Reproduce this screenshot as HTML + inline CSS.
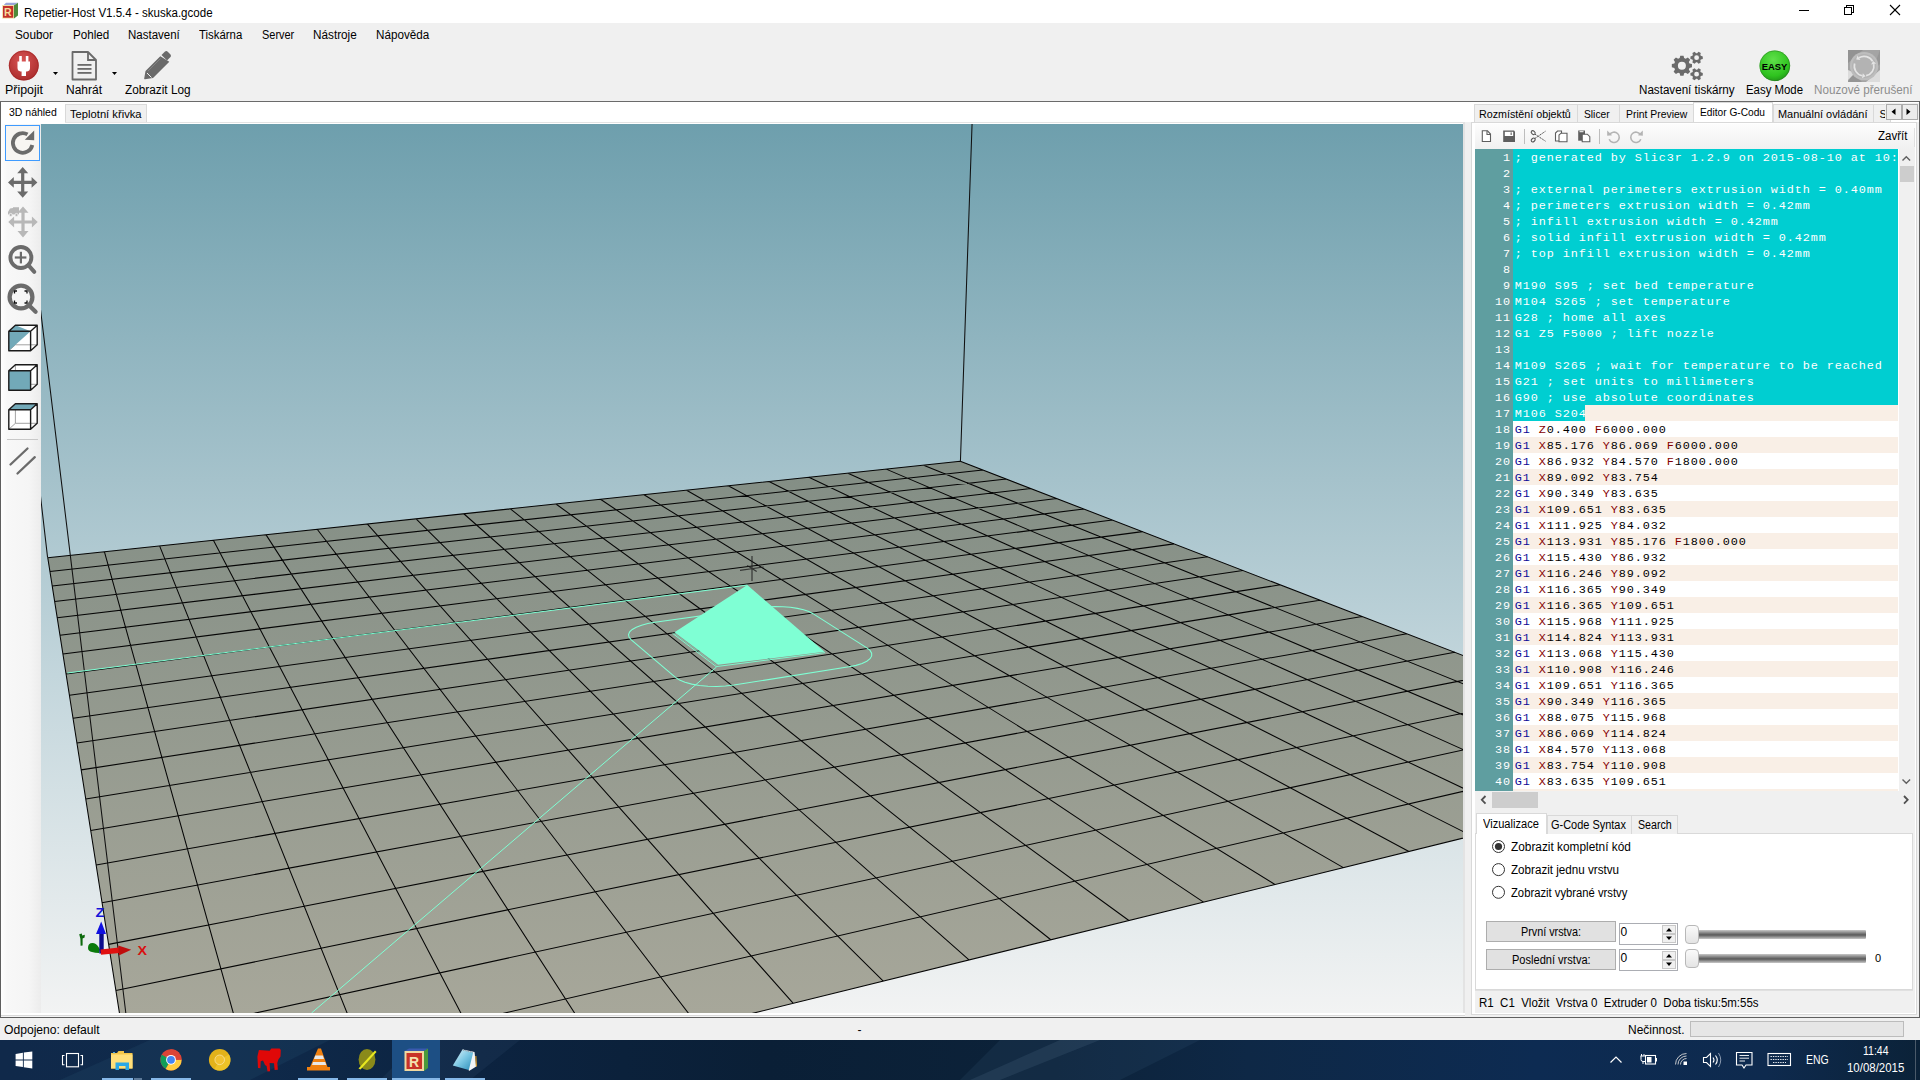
<!DOCTYPE html><html><head><meta charset="utf-8"><style>
html,body{margin:0;padding:0;}
body{width:1920px;height:1080px;overflow:hidden;position:relative;background:#f0f0f0;font-family:"Liberation Sans",sans-serif;}
.t{position:absolute;white-space:pre;line-height:1;transform-origin:0 0;}
.r{position:absolute;box-sizing:border-box;}
svg{position:absolute;overflow:visible;}
</style></head><body>
<div class="r" style="left:0px;top:0px;width:1920px;height:23px;background:#ffffff;"></div>
<svg style="left:0;top:0" width="24" height="23" viewBox="0 0 24 23">
<polygon points="3.5,5.2 6,2.8 18,2.8 14,5.2" fill="#9aa6d8"/>
<polygon points="14,5.2 18,2.8 18,15.5 14,18.5" fill="#4f8a3a"/>
<rect x="2.2" y="5.1" width="11.8" height="13.4" fill="#f2dca0"/>
<rect x="3" y="6" width="10.2" height="11.7" fill="#c3302a"/>
<text x="3.9" y="16.2" font-family="Liberation Sans" font-weight="bold" font-size="11.5" fill="#f6dc9c" textLength="7.6" lengthAdjust="spacingAndGlyphs">R</text>
</svg>
<div class="t " style="left:23.50px;top:6.64px;font-size:12px;color:#000;font-family:'Liberation Sans', sans-serif;font-weight:normal;transform:scaleX(0.9615);">Repetier-Host V1.5.4 - skuska.gcode</div>
<svg style="left:1780px;top:0" width="140" height="23" viewBox="1780 0 140 23">
<line x1="1799" y1="10.5" x2="1809" y2="10.5" stroke="#000" stroke-width="1"/>
<rect x="1846.5" y="5.5" width="7" height="7" fill="none" stroke="#000" stroke-width="1"/>
<rect x="1844.5" y="7.5" width="7" height="7" fill="#fff" stroke="#000" stroke-width="1"/>
<line x1="1890" y1="5" x2="1900" y2="15" stroke="#000" stroke-width="1.1"/>
<line x1="1900" y1="5" x2="1890" y2="15" stroke="#000" stroke-width="1.1"/>
</svg>
<div class="t " style="left:15.00px;top:29.34px;font-size:12px;color:#000;font-family:'Liberation Sans', sans-serif;font-weight:normal;transform:scaleX(0.9822);">Soubor</div>
<div class="t " style="left:72.50px;top:29.34px;font-size:12px;color:#000;font-family:'Liberation Sans', sans-serif;font-weight:normal;transform:scaleX(0.9703);">Pohled</div>
<div class="t " style="left:128.25px;top:29.34px;font-size:12px;color:#000;font-family:'Liberation Sans', sans-serif;font-weight:normal;transform:scaleX(0.9581);">Nastavení</div>
<div class="t " style="left:199.25px;top:29.34px;font-size:12px;color:#000;font-family:'Liberation Sans', sans-serif;font-weight:normal;transform:scaleX(0.9489);">Tiskárna</div>
<div class="t " style="left:262.00px;top:29.34px;font-size:12px;color:#000;font-family:'Liberation Sans', sans-serif;font-weight:normal;transform:scaleX(0.9125);">Server</div>
<div class="t " style="left:313.25px;top:29.34px;font-size:12px;color:#000;font-family:'Liberation Sans', sans-serif;font-weight:normal;transform:scaleX(0.9790);">Nástroje</div>
<div class="t " style="left:376.25px;top:29.34px;font-size:12px;color:#000;font-family:'Liberation Sans', sans-serif;font-weight:normal;transform:scaleX(0.9734);">Nápověda</div>
<svg style="left:0;top:44px" width="200" height="40" viewBox="0 44 200 40">
<defs><radialGradient id="rg1" cx="0.45" cy="0.35" r="0.7"><stop offset="0" stop-color="#d95555"/><stop offset="1" stop-color="#a82a2a"/></radialGradient></defs>
<circle cx="23.8" cy="65.6" r="15" fill="url(#rg1)"/>
<circle cx="23.8" cy="65.6" r="14.5" fill="none" stroke="#9a2020" stroke-width="0.8" opacity="0.6"/>
<rect x="19.2" y="56" width="2.6" height="6" fill="#fff"/>
<rect x="25.8" y="56" width="2.6" height="6" fill="#fff"/>
<path d="M17.5,61.5 H30 V68 Q30,71 27,71.5 H26 V76 H21.6 V71.5 H20.6 Q17.5,71 17.5,68 Z" fill="#fff"/>
<path d="M53,72 L58,72 L55.5,75 Z" fill="#000"/>
<path d="M112,72 L117,72 L114.5,75 Z" fill="#000"/>
<path d="M72.5,52 H88 L96,60 V79.5 H72.5 Z" fill="none" stroke="#6a6a6a" stroke-width="1.8" stroke-linejoin="round"/>
<path d="M88,52 V60 H96" fill="none" stroke="#6a6a6a" stroke-width="1.8"/>
<rect x="77.5" y="64" width="14" height="1.8" fill="#6a6a6a"/>
<rect x="77.5" y="68" width="14" height="1.8" fill="#6a6a6a"/>
<rect x="77.5" y="72" width="14" height="1.8" fill="#6a6a6a"/>
<path d="M161.5,55 L165,51.5 Q166.5,50.5 168,52 L170.5,54.5 Q171.5,56 170.5,57 L167,60.5 Z" fill="#6a6a6a"/>
<path d="M160.3,56.2 L169.3,61.7 L153,78 L145,79.3 Q144,79.5 144.2,78.5 L145.5,71 Z" fill="#6a6a6a"/>
<path d="M147,73 L151.5,77.5" stroke="#f0f0f0" stroke-width="1"/>
<path d="M148,71 L160.5,58.5" stroke="#8a8a8a" stroke-width="0.8"/>
</svg>
<div class="t " style="left:5.00px;top:83.84px;font-size:12px;color:#000;font-family:'Liberation Sans', sans-serif;font-weight:normal;transform:scaleX(1.0358);">Připojit</div>
<div class="t " style="left:66.00px;top:83.84px;font-size:12px;color:#000;font-family:'Liberation Sans', sans-serif;font-weight:normal;transform:scaleX(0.9996);">Nahrát</div>
<div class="t " style="left:125.00px;top:83.84px;font-size:12px;color:#000;font-family:'Liberation Sans', sans-serif;font-weight:normal;transform:scaleX(0.9837);">Zobrazit Log</div>
<svg style="left:1600px;top:44px" width="320" height="42" viewBox="1600 44 320 42">
<path d="M1679.68,58.12 L1680.26,55.63 L1683.54,55.63 L1684.12,58.12 L1685.69,58.77 L1687.86,57.42 L1690.18,59.74 L1688.83,61.91 L1689.48,63.48 L1691.97,64.06 L1691.97,67.34 L1689.48,67.92 L1688.83,69.49 L1690.18,71.66 L1687.86,73.98 L1685.69,72.63 L1684.12,73.28 L1683.54,75.77 L1680.26,75.77 L1679.68,73.28 L1678.11,72.63 L1675.94,73.98 L1673.62,71.66 L1674.97,69.49 L1674.32,67.92 L1671.83,67.34 L1671.83,64.06 L1674.32,63.48 L1674.97,61.91 L1673.62,59.74 L1675.94,57.42 L1678.11,58.77 Z M1685.90,65.70 A4.0,4.0 0 1 0 1677.90,65.70 A4.0,4.0 0 1 0 1685.90,65.70 Z" fill="#6a6a6a" fill-rule="evenodd"/>
<path d="M1700.81,55.85 L1702.77,56.41 L1702.77,58.99 L1700.81,59.55 L1700.31,60.43 L1700.80,62.39 L1698.57,63.69 L1697.11,62.27 L1696.09,62.27 L1694.63,63.69 L1692.40,62.39 L1692.89,60.43 L1692.39,59.55 L1690.43,58.99 L1690.43,56.41 L1692.39,55.85 L1692.89,54.97 L1692.40,53.01 L1694.63,51.71 L1696.09,53.13 L1697.11,53.13 L1698.57,51.71 L1700.80,53.01 L1700.31,54.97 Z M1699.00,57.70 A2.4,2.4 0 1 0 1694.20,57.70 A2.4,2.4 0 1 0 1699.00,57.70 Z" fill="#6a6a6a" fill-rule="evenodd"/>
<path d="M1700.81,72.35 L1702.77,72.91 L1702.77,75.49 L1700.81,76.05 L1700.31,76.93 L1700.80,78.89 L1698.57,80.19 L1697.11,78.77 L1696.09,78.77 L1694.63,80.19 L1692.40,78.89 L1692.89,76.93 L1692.39,76.05 L1690.43,75.49 L1690.43,72.91 L1692.39,72.35 L1692.89,71.47 L1692.40,69.51 L1694.63,68.21 L1696.09,69.63 L1697.11,69.63 L1698.57,68.21 L1700.80,69.51 L1700.31,71.47 Z M1699.00,74.20 A2.4,2.4 0 1 0 1694.20,74.20 A2.4,2.4 0 1 0 1699.00,74.20 Z" fill="#6a6a6a" fill-rule="evenodd"/>
<defs><radialGradient id="rg2" cx="0.45" cy="0.3" r="0.75"><stop offset="0" stop-color="#5fe04a"/><stop offset="0.7" stop-color="#2fc31f"/><stop offset="1" stop-color="#1f8f18"/></radialGradient>
<radialGradient id="rg3" cx="0.5" cy="0.5" r="0.6"><stop offset="0" stop-color="#bdbdbd"/><stop offset="1" stop-color="#a8a8a8"/></radialGradient></defs>
<circle cx="1774.8" cy="65.8" r="15.3" fill="url(#rg2)"/>
<circle cx="1774.8" cy="65.8" r="15" fill="none" stroke="#2a6a22" stroke-width="0.6" opacity="0.7"/>
<text x="1774.5" y="69.7" text-anchor="middle" font-family="Liberation Sans" font-weight="bold" font-size="9" fill="#000" textLength="25.6" lengthAdjust="spacingAndGlyphs">EASY</text>
<rect x="1848" y="50" width="32" height="32" fill="#a4a4a4"/>
<polygon points="1848,50 1863,50 1848,63" fill="#939393"/>
<polygon points="1880,50 1880,64 1872,72" fill="#939393" opacity="0.8"/>
<polygon points="1848,82 1862,82 1853,73" fill="#959595"/>
<polygon points="1880,82 1866,82 1880,70" fill="#dcdcdc"/>
<polygon points="1848,70 1848,80 1855,73" fill="#dcdcdc"/>
<circle cx="1864.1" cy="66.1" r="14.2" fill="#bdbdbd"/>
<circle cx="1864.1" cy="66.1" r="12" fill="#b3b3b3"/>
<path d="M1858.91,57.79 A9.8,9.8 0 0 1 1872.59,61.20 M1873.69,64.06 A9.8,9.8 0 0 1 1866.14,75.69 M1862.40,75.75 A9.8,9.8 0 0 1 1854.63,63.56" fill="none" stroke="#e4e4e4" stroke-width="1.7"/>
<path d="M1856.19,59.48 L1857.53,55.58 L1860.28,59.99 Z" fill="#e4e4e4"/><path d="M1873.02,60.93 L1876.23,63.52 L1871.14,64.60 Z" fill="#e4e4e4"/><path d="M1865.55,76.31 L1861.95,78.31 L1862.85,73.19 Z" fill="#e4e4e4"/>
</svg>
<div class="t " style="left:1639.40px;top:83.94px;font-size:12px;color:#000;font-family:'Liberation Sans', sans-serif;font-weight:normal;transform:scaleX(0.9687);">Nastavení tiskárny</div>
<div class="t " style="left:1746.00px;top:83.94px;font-size:12px;color:#000;font-family:'Liberation Sans', sans-serif;font-weight:normal;transform:scaleX(0.9498);">Easy Mode</div>
<div class="t " style="left:1814.00px;top:83.94px;font-size:12px;color:#8d8d8d;font-family:'Liberation Sans', sans-serif;font-weight:normal;transform:scaleX(0.9716);">Nouzové přerušení</div>
<div class="r" style="left:0px;top:101px;width:1920px;height:1px;background:#6a6a6a;"></div>
<div class="r" style="left:0px;top:102px;width:1px;height:916px;background:#5f5f5f;"></div>
<div class="r" style="left:1px;top:102px;width:1462px;height:22px;background:#ffffff;"></div>
<div class="r" style="left:65px;top:104px;width:82px;height:19px;background:#f0f0f0;border:1px solid #d9d9d9;border-bottom:none;"></div>
<div class="t " style="left:9.20px;top:106.59px;font-size:11px;color:#000;font-family:'Liberation Sans', sans-serif;font-weight:normal;transform:scaleX(0.9524);">3D náhled</div>
<div class="t " style="left:70.40px;top:108.69px;font-size:11px;color:#000;font-family:'Liberation Sans', sans-serif;font-weight:normal;transform:scaleX(1.0179);">Teplotní křivka</div>
<div class="r" style="left:65px;top:122px;width:1400px;height:1px;background:#e3e3e3;"></div>
<div class="r" style="left:1463px;top:122px;width:2px;height:892px;background:#e3e3e3;"></div>
<div class="r" style="left:1px;top:1013px;width:1464px;height:2px;background:#ffffff;"></div>
<div class="r" style="left:1px;top:1015px;width:1464px;height:1px;background:#d9d9d9;"></div>
<div class="r" style="left:1px;top:1016px;width:1464px;height:1px;background:#f4f4f4;"></div>
<div class="r" style="left:0px;top:1017px;width:1920px;height:1px;background:#5f5f5f;"></div>
<div class="r" style="left:1px;top:124px;width:40px;height:889px;background:linear-gradient(to right,#ffffff 0%,#f8f8f8 15%,#f5f5f5 70%,#ececec 100%);"></div>
<svg style="left:0;top:120px" width="42" height="370" viewBox="0 120 42 370">
<rect x="5.5" y="125.5" width="34" height="35" fill="#f7f5f2" stroke="#3f9bff" stroke-width="1"/>
<path d="M32.3,145 A9.8,9.8 0 1 1 27.5,134.4" fill="none" stroke="#6b6b6b" stroke-width="3.8"/>
<path d="M34.2,130.6 L34.2,140.2 L24.8,139.8 Z" fill="#6b6b6b"/>
<path d="M22.7,167 L28.2,173.2 L24.3,173.2 L24.3,180.8 L31.6,180.8 L31.6,177 L37.4,182.4 L31.6,187.8 L31.6,184 L24.3,184 L24.3,191.5 L28.2,191.5 L22.7,197.8 L17.2,191.5 L21.1,191.5 L21.1,184 L13.8,184 L13.8,187.8 L8,182.4 L13.8,177 L13.8,180.8 L21.1,180.8 L21.1,173.2 L17.2,173.2 Z" fill="#6b6b6b"/>
<g transform="translate(0.3,39.6)" fill="#b8b8b8">
<path d="M22.7,167 L28.2,173.2 L24.3,173.2 L24.3,180.8 L31.6,180.8 L31.6,177 L37.4,182.4 L31.6,187.8 L31.6,184 L24.3,184 L24.3,191.5 L28.2,191.5 L22.7,197.8 L17.2,191.5 L21.1,191.5 L21.1,184 L13.8,184 L13.8,187.8 L8,182.4 L13.8,177 L13.8,180.8 L21.1,180.8 L21.1,173.2 L17.2,173.2 Z"/>
</g>
<path d="M8,212 L10,208.5 L13,208 L13,207.2 L19,207.2 L19,214.5 L8,214.5 Z" fill="#b8b8b8"/>
<circle cx="10.7" cy="215" r="1.6" fill="#b8b8b8" stroke="#f5f5f5" stroke-width="0.8"/>
<circle cx="16.5" cy="215" r="1.6" fill="#b8b8b8" stroke="#f5f5f5" stroke-width="0.8"/>
<circle cx="20.9" cy="257.5" r="10.5" fill="none" stroke="#6b6b6b" stroke-width="3.9"/>
<line x1="28.3" y1="265.2" x2="34.3" y2="271.8" stroke="#6b6b6b" stroke-width="4" stroke-linecap="round"/>
<rect x="14.8" y="256.4" width="11.6" height="2.2" fill="#6b6b6b"/>
<rect x="19.8" y="251.8" width="2.2" height="11.6" fill="#6b6b6b"/>
<circle cx="21" cy="297" r="11.4" fill="none" stroke="#6b6b6b" stroke-width="4.3"/>
<line x1="29.2" y1="305.6" x2="35.6" y2="311.8" stroke="#6b6b6b" stroke-width="4.2" stroke-linecap="round"/>
<path d="M14.5,293.5 V291 H17 M24.5,291 H27 V293.5 M27,300.5 V303 H24.5 M17,303 H14.5 V300.5" fill="none" stroke="#111" stroke-width="1.3"/>

<polygon points="8.8,350.8 8.8,331.3 15.4,325.3 37.2,325.3 37.2,344.8 30.6,350.8" fill="#fff"/><path d="M15.4,325.3 V344.8 H37.2 M15.4,344.8 L8.8,350.8" fill="none" stroke="#8a8a8a" stroke-width="0.8"/><polygon points="8.8,350.8 8.8,331.3 15.4,325.3 30.6,331.3" fill="#72a9b8"/><path d="M8.8,331.3 H30.6 V350.8 H8.8 Z M8.8,331.3 L15.4,325.3 H37.2 L30.6,331.3 M37.2,325.3 V344.8 L30.6,350.8" fill="none" stroke="#1a1a1a" stroke-width="1.4" stroke-linejoin="round"/><polygon points="8.8,390.3 8.8,370.8 15.4,364.8 37.2,364.8 37.2,384.3 30.6,390.3" fill="#fff"/><path d="M15.4,364.8 V384.3 H37.2 M15.4,384.3 L8.8,390.3" fill="none" stroke="#8a8a8a" stroke-width="0.8"/><rect x="8.8" y="370.8" width="21.8" height="19.5" fill="#72a9b8"/><path d="M8.8,370.8 H30.6 V390.3 H8.8 Z M8.8,370.8 L15.4,364.8 H37.2 L30.6,370.8 M37.2,364.8 V384.3 L30.6,390.3" fill="none" stroke="#1a1a1a" stroke-width="1.4" stroke-linejoin="round"/><polygon points="8.8,429.3 8.8,409.8 15.4,403.8 37.2,403.8 37.2,423.3 30.6,429.3" fill="#fff"/><path d="M15.4,403.8 V423.3 H37.2 M15.4,423.3 L8.8,429.3" fill="none" stroke="#8a8a8a" stroke-width="0.8"/><polygon points="8.8,409.8 15.4,403.8 37.2,403.8 30.6,409.8" fill="#72a9b8"/><path d="M8.8,409.8 H30.6 V429.3 H8.8 Z M8.8,409.8 L15.4,403.8 H37.2 L30.6,409.8 M37.2,403.8 V423.3 L30.6,429.3" fill="none" stroke="#1a1a1a" stroke-width="1.4" stroke-linejoin="round"/>
<line x1="7" y1="439.5" x2="38" y2="439.5" stroke="#c8c8c8" stroke-width="1"/>
<line x1="10.5" y1="464.5" x2="27.5" y2="448.5" stroke="#6b6b6b" stroke-width="2.3" stroke-linecap="round"/>
<line x1="17.5" y1="473.5" x2="34.8" y2="457.2" stroke="#6b6b6b" stroke-width="2.3" stroke-linecap="round"/>
</svg>
<svg style="left:41px;top:124px" width="1422" height="889" viewBox="41 124 1422 889">
<defs>
<linearGradient id="bg3d" x1="0" y1="124" x2="0" y2="1013" gradientUnits="userSpaceOnUse"><stop offset="0" stop-color="#6e9fad"/><stop offset="0.4" stop-color="#a5c2cb"/><stop offset="0.62" stop-color="#c3d6dc"/><stop offset="1" stop-color="#f2f3f3"/></linearGradient>
<linearGradient id="bed" x1="0" y1="462" x2="0" y2="1013" gradientUnits="userSpaceOnUse"><stop offset="0" stop-color="#838e85"/><stop offset="1" stop-color="#a7a79a"/></linearGradient>
<clipPath id="vclip"><rect x="41" y="124" width="1422" height="889"/></clipPath>
</defs>
<g clip-path="url(#vclip)">
<rect x="41" y="124" width="1422" height="889" fill="url(#bg3d)"/>
<polygon points="47.75,557.69 960.28,461.31 1751.61,766.92 143.16,1163.66" fill="url(#bed)"/>
<path d="M47.75,557.69L143.16,1163.66M47.75,557.69L960.28,461.31M104.38,551.70L266.85,1133.15M49.91,571.43L982.75,469.99M159.58,545.87L383.74,1104.32M52.21,585.98L1006.26,479.07M213.42,540.19L494.36,1077.03M54.64,601.43L1030.89,488.58M265.94,534.64L599.20,1051.17M57.22,617.85L1056.73,498.56M317.20,529.23L698.71,1026.63M59.98,635.33L1083.86,509.03M367.23,523.94L793.28,1003.30M62.91,653.99L1112.38,520.05M416.09,518.78L883.27,981.10M66.05,673.94L1142.40,531.64M463.80,513.74L969.01,959.95M69.42,695.34L1174.05,543.87M510.41,508.82L1050.79,939.78M73.04,718.33L1207.46,556.77M555.97,504.01L1128.88,920.52M76.94,743.10L1242.78,570.41M600.50,499.31L1203.53,902.11M81.16,769.88L1280.18,584.85M644.03,494.71L1274.94,884.49M85.73,798.91L1319.85,600.17M686.61,490.21L1343.34,867.62M90.70,830.49L1362.00,616.45M728.26,485.81L1408.91,851.45M96.13,864.96L1406.88,633.78M769.01,481.51L1471.82,835.93M102.08,902.76L1454.75,652.27M808.90,477.30L1532.23,821.03M108.63,944.39L1505.92,672.03M847.94,473.17L1590.28,806.71M115.88,990.44L1560.75,693.21M886.17,469.14L1646.12,792.94M123.95,1041.68L1619.66,715.96M923.61,465.18L1699.85,779.69M132.98,1099.03L1683.09,740.46M960.28,461.31L1751.61,766.92M143.16,1163.66L1751.61,766.92" stroke="#050505" stroke-width="1.05" fill="none"/>
<path d="M47.6,557.6 L41.4,504 L38,475 M960.4,462.1 L972.2,120 M137.9,1112.7 L40.2,307 L35,264" stroke="#101010" stroke-width="1.05" fill="none"/>
<polygon points="760.50,607.62 767.75,606.86 775.33,606.56 782.98,606.71 790.42,607.31 797.37,608.35 803.60,609.78 808.86,611.57 812.95,613.64 866.83,647.86 870.00,650.44 871.64,653.17 871.66,655.95 870.04,658.66 866.81,661.21 862.08,663.48 856.03,665.38 848.90,666.83 733.87,685.06 725.49,686.06 716.72,686.47 707.93,686.27 699.48,685.47 691.72,684.11 684.97,682.25 679.48,679.96 675.46,677.34 631.03,639.58 628.97,637.09 628.51,634.51 629.62,631.93 632.25,629.46 636.28,627.19 641.54,625.19 647.83,623.54 654.91,622.30" fill="none" stroke="#7fffd4" stroke-width="1.1"/>
<path d="M67.4,673 L747.3,585.1 M311.5,1013 L716.5,667" stroke="#7fffd4" stroke-width="1" fill="none"/>
<polygon points="747.3,585.1 674.5,632.2 718,664.8 824.5,651.8" fill="#7fffd4"/>
<path d="M672.6,633.4 L716.2,666.6 L825,652.6" stroke="#7fffd4" stroke-width="0.9" fill="none"/>
<path d="M674.2,633.2 L717.4,665.8" stroke="#7fffd4" stroke-width="0.6" fill="none" opacity="0.6"/>
<path d="M752,556 V581 M747.2,565.5 L756.7,571.6 M740,570.3 L763.7,567" stroke="#1e1e1e" stroke-width="1.2" fill="none" opacity="0.8"/>
</g>
<g>
<path d="M88,948 Q88,943 92.5,943 Q96,943 98.5,947 L100,949.5 L99,953 Q95,953 92,952 Q88,951 88,948 Z" fill="#0b7a0b"/>
<path d="M79.2,934.2 L81.8,933.5 L82.2,935.5 L84.8,934.8 L84.6,937.5 L82.6,938.5 L82.6,945.5 L80.6,945.8 L80.4,938.8 Z" fill="#0c6a0c"/>
<rect x="99.3" y="933" width="4.4" height="20.5" fill="#0a0a8c"/>
<path d="M96,934 L101.2,921.5 L106,934 Z" fill="#1010e0"/>
<text x="95.5" y="916.5" font-family="Liberation Sans" font-weight="bold" font-size="12.5" fill="#1414d8" textLength="9" lengthAdjust="spacingAndGlyphs">Z</text>
<path d="M100.5,949.5 L119,947.6 L119.5,953 L101,954.8 Z" fill="#e01010"/>
<path d="M118.3,945.4 L131.2,949.8 L118.8,955.6 Z" fill="#c00c0c"/>
<text x="137.5" y="955" font-family="Liberation Sans" font-weight="bold" font-size="13" fill="#d81010" textLength="9.5" lengthAdjust="spacingAndGlyphs">X</text>
</g>
</svg>
<div class="r" style="left:1462px;top:102px;width:457px;height:20px;background:#ffffff;"></div>
<div class="r" style="left:1919px;top:101px;width:1px;height:917px;background:#5f5f5f;"></div>
<div class="r" style="left:1473.5px;top:104px;width:104.5px;height:19px;background:#f0f0f0;border:1px solid #d9d9d9;border-bottom:none;"></div>
<div class="t " style="left:1479.40px;top:108.79px;font-size:11px;color:#000;font-family:'Liberation Sans', sans-serif;font-weight:normal;transform:scaleX(0.9754);">Rozmístění objektů</div>
<div class="r" style="left:1577px;top:104px;width:43px;height:19px;background:#f0f0f0;border:1px solid #d9d9d9;border-bottom:none;"></div>
<div class="t " style="left:1584.40px;top:108.79px;font-size:11px;color:#000;font-family:'Liberation Sans', sans-serif;font-weight:normal;transform:scaleX(0.9309);">Slicer</div>
<div class="r" style="left:1619px;top:104px;width:74.5px;height:19px;background:#f0f0f0;border:1px solid #d9d9d9;border-bottom:none;"></div>
<div class="t " style="left:1626.25px;top:108.79px;font-size:11px;color:#000;font-family:'Liberation Sans', sans-serif;font-weight:normal;transform:scaleX(0.9450);">Print Preview</div>
<div class="r" style="left:1773px;top:104px;width:101px;height:19px;background:#f0f0f0;border:1px solid #d9d9d9;border-bottom:none;"></div>
<div class="t " style="left:1778.00px;top:108.79px;font-size:11px;color:#000;font-family:'Liberation Sans', sans-serif;font-weight:normal;transform:scaleX(0.9948);">Manuální ovládání</div>
<div class="r" style="left:1873px;top:104px;width:18px;height:19px;background:#f0f0f0;border:1px solid #d9d9d9;border-bottom:none;"></div>
<div class="t " style="left:1879.50px;top:108.79px;font-size:11px;color:#000;font-family:'Liberation Sans', sans-serif;font-weight:normal;">S</div>
<div class="r" style="left:1692.5px;top:102px;width:80.5px;height:21px;background:#ffffff;border:1px solid #d9d9d9;border-bottom:none;"></div>
<div class="t " style="left:1700.00px;top:106.79px;font-size:11px;color:#000;font-family:'Liberation Sans', sans-serif;font-weight:normal;transform:scaleX(0.9240);">Editor G-Codu</div>
<div class="r" style="left:1885px;top:103px;width:34px;height:17px;background:#f0f0f0;"></div>
<div class="r" style="left:1886px;top:104px;width:16px;height:16px;background:#ececec;border:1px solid #acacac;"></div>
<div class="r" style="left:1902px;top:104px;width:16px;height:16px;background:#ececec;border:1px solid #acacac;"></div>
<svg style="left:1880px;top:100px" width="40" height="24" viewBox="1880 100 40 24"><path d="M1895.5,108.5 L1891.5,111.8 L1895.5,115 Z M1906.5,108.5 L1910.5,111.8 L1906.5,115 Z" fill="#000"/></svg>
<div class="r" style="left:1471px;top:122px;width:446px;height:893px;background:#ffffff;border:1px solid #d9d9d9;"></div>
<div class="r" style="left:1475px;top:124px;width:440px;height:25px;background:linear-gradient(#fdfdfd,#f0f0f0);"></div>
<div class="r" style="left:1914px;top:128px;width:1px;height:19px;background:#e0e0e0;"></div>
<svg style="left:1475px;top:124px" width="180" height="25" viewBox="1475 124 180 25">
<path d="M1482.3,130.8 H1487.5 L1490.5,134 V141.5 H1482.3 Z" fill="#fff" stroke="#5e5e5e" stroke-width="1.1"/>
<path d="M1487,130.8 V134.5 H1490.5" fill="none" stroke="#5e5e5e" stroke-width="1.1"/>
<path d="M1503.2,130.6 H1514 L1515,131.6 V142 H1503.2 Z" fill="#5e5e5e"/>
<rect x="1504.8" y="131.8" width="8.4" height="4.2" fill="#fff"/>
<rect x="1510.6" y="132.4" width="1.1" height="2.6" fill="#5e5e5e"/>
<line x1="1524.5" y1="129" x2="1524.5" y2="144" stroke="#bdbdbd" stroke-width="1"/>
<ellipse cx="1533.2" cy="132.6" rx="2.2" ry="1.6" transform="rotate(40 1533.2 132.6)" fill="none" stroke="#555" stroke-width="1.1"/>
<ellipse cx="1533.2" cy="140" rx="2.2" ry="1.6" transform="rotate(-40 1533.2 140)" fill="none" stroke="#555" stroke-width="1.1"/>
<path d="M1535,134.2 L1545.5,141.2 M1535,138.4 L1545.5,131.2" stroke="#555" stroke-width="1" stroke-dasharray="1.4 0.6"/>
<path d="M1555.5,141 V133 L1557.5,131 H1561.5 V141 Z" fill="#fff" stroke="#5e5e5e" stroke-width="1.1"/>
<path d="M1559,141.8 V135 L1561,133.2 H1567 V141.8 Z" fill="#fff" stroke="#5e5e5e" stroke-width="1.1"/>
<rect x="1578.2" y="130.5" width="6.8" height="10.2" fill="#5e5e5e"/>
<rect x="1579.5" y="131.2" width="4" height="1" fill="#fff"/>
<path d="M1582.2,141.8 V134.2 H1587.3 L1589.8,136.7 V141.8 Z" fill="#fff" stroke="#5e5e5e" stroke-width="1.1"/>
<line x1="1599.5" y1="129" x2="1599.5" y2="144" stroke="#bdbdbd" stroke-width="1"/>
<path d="M1609.5,134.8 A5.2,5.2 0 1 1 1609.2,139.2" fill="none" stroke="#b4b4b4" stroke-width="1.6"/>
<path d="M1607.2,130.5 L1607.2,135.8 L1612.2,135.2 Z" fill="#b4b4b4"/>
<path d="M1640.5,134.8 A5.2,5.2 0 1 0 1640.8,139.2" fill="none" stroke="#b4b4b4" stroke-width="1.6"/>
<path d="M1642.8,130.5 L1642.8,135.8 L1637.8,135.2 Z" fill="#b4b4b4"/>
</svg>
<div class="t " style="left:1878.00px;top:129.74px;font-size:12px;color:#000;font-family:'Liberation Sans', sans-serif;font-weight:normal;transform:scaleX(0.9623);">Zavřít</div>
<div class="r" style="left:1475px;top:149px;width:423px;height:642px;background:#ffffff;"></div>
<div class="r" style="left:1475px;top:149px;width:38px;height:642px;background:#5f9ea0;"></div>
<div class="r" style="left:1513px;top:149px;width:385px;height:16px;background:#00ced1"></div>
<div class="r" style="left:1513px;top:165px;width:385px;height:16px;background:#00ced1"></div>
<div class="r" style="left:1513px;top:181px;width:385px;height:16px;background:#00ced1"></div>
<div class="r" style="left:1513px;top:197px;width:385px;height:16px;background:#00ced1"></div>
<div class="r" style="left:1513px;top:213px;width:385px;height:16px;background:#00ced1"></div>
<div class="r" style="left:1513px;top:229px;width:385px;height:16px;background:#00ced1"></div>
<div class="r" style="left:1513px;top:245px;width:385px;height:16px;background:#00ced1"></div>
<div class="r" style="left:1513px;top:261px;width:385px;height:16px;background:#00ced1"></div>
<div class="r" style="left:1513px;top:277px;width:385px;height:16px;background:#00ced1"></div>
<div class="r" style="left:1513px;top:293px;width:385px;height:16px;background:#00ced1"></div>
<div class="r" style="left:1513px;top:309px;width:385px;height:16px;background:#00ced1"></div>
<div class="r" style="left:1513px;top:325px;width:385px;height:16px;background:#00ced1"></div>
<div class="r" style="left:1513px;top:341px;width:385px;height:16px;background:#00ced1"></div>
<div class="r" style="left:1513px;top:357px;width:385px;height:16px;background:#00ced1"></div>
<div class="r" style="left:1513px;top:373px;width:385px;height:16px;background:#00ced1"></div>
<div class="r" style="left:1513px;top:389px;width:385px;height:16px;background:#00ced1"></div>
<div class="r" style="left:1513px;top:405px;width:385px;height:16px;background:#f9efe6"></div>
<div class="r" style="left:1513px;top:405px;width:72px;height:16px;background:#00ced1"></div>
<div class="r" style="left:1513px;top:437px;width:385px;height:16px;background:#f9efe6"></div>
<div class="r" style="left:1513px;top:469px;width:385px;height:16px;background:#f9efe6"></div>
<div class="r" style="left:1513px;top:501px;width:385px;height:16px;background:#f9efe6"></div>
<div class="r" style="left:1513px;top:533px;width:385px;height:16px;background:#f9efe6"></div>
<div class="r" style="left:1513px;top:565px;width:385px;height:16px;background:#f9efe6"></div>
<div class="r" style="left:1513px;top:597px;width:385px;height:16px;background:#f9efe6"></div>
<div class="r" style="left:1513px;top:629px;width:385px;height:16px;background:#f9efe6"></div>
<div class="r" style="left:1513px;top:661px;width:385px;height:16px;background:#f9efe6"></div>
<div class="r" style="left:1513px;top:693px;width:385px;height:16px;background:#f9efe6"></div>
<div class="r" style="left:1513px;top:725px;width:385px;height:16px;background:#f9efe6"></div>
<div class="r" style="left:1513px;top:757px;width:385px;height:16px;background:#f9efe6"></div>
<div class="r" style="left:1513px;top:789px;width:385px;height:2px;background:#f9efe6"></div>
<div style="position:absolute;left:1475px;top:150px;width:423px;height:641px;overflow:hidden;font-family:'Liberation Mono', monospace;font-size:11.8px;letter-spacing:0.92px;line-height:16px;white-space:pre;">
<div style="position:absolute;left:0;top:0px;width:36px;text-align:right;color:#fff;">1</div>
<div style="position:absolute;left:39.8px;top:0px;color:#fff;">; generated by Slic3r 1.2.9 on 2015-08-10 at 10:59:24</div>
<div style="position:absolute;left:0;top:16px;width:36px;text-align:right;color:#fff;">2</div>
<div style="position:absolute;left:39.8px;top:16px;color:#fff;"></div>
<div style="position:absolute;left:0;top:32px;width:36px;text-align:right;color:#fff;">3</div>
<div style="position:absolute;left:39.8px;top:32px;color:#fff;">; external perimeters extrusion width = 0.40mm</div>
<div style="position:absolute;left:0;top:48px;width:36px;text-align:right;color:#fff;">4</div>
<div style="position:absolute;left:39.8px;top:48px;color:#fff;">; perimeters extrusion width = 0.42mm</div>
<div style="position:absolute;left:0;top:64px;width:36px;text-align:right;color:#fff;">5</div>
<div style="position:absolute;left:39.8px;top:64px;color:#fff;">; infill extrusion width = 0.42mm</div>
<div style="position:absolute;left:0;top:80px;width:36px;text-align:right;color:#fff;">6</div>
<div style="position:absolute;left:39.8px;top:80px;color:#fff;">; solid infill extrusion width = 0.42mm</div>
<div style="position:absolute;left:0;top:96px;width:36px;text-align:right;color:#fff;">7</div>
<div style="position:absolute;left:39.8px;top:96px;color:#fff;">; top infill extrusion width = 0.42mm</div>
<div style="position:absolute;left:0;top:112px;width:36px;text-align:right;color:#fff;">8</div>
<div style="position:absolute;left:39.8px;top:112px;color:#fff;"></div>
<div style="position:absolute;left:0;top:128px;width:36px;text-align:right;color:#fff;">9</div>
<div style="position:absolute;left:39.8px;top:128px;color:#fff;">M190 S95 ; set bed temperature</div>
<div style="position:absolute;left:0;top:144px;width:36px;text-align:right;color:#fff;">10</div>
<div style="position:absolute;left:39.8px;top:144px;color:#fff;">M104 S265 ; set temperature</div>
<div style="position:absolute;left:0;top:160px;width:36px;text-align:right;color:#fff;">11</div>
<div style="position:absolute;left:39.8px;top:160px;color:#fff;">G28 ; home all axes</div>
<div style="position:absolute;left:0;top:176px;width:36px;text-align:right;color:#fff;">12</div>
<div style="position:absolute;left:39.8px;top:176px;color:#fff;">G1 Z5 F5000 ; lift nozzle</div>
<div style="position:absolute;left:0;top:192px;width:36px;text-align:right;color:#fff;">13</div>
<div style="position:absolute;left:39.8px;top:192px;color:#fff;"></div>
<div style="position:absolute;left:0;top:208px;width:36px;text-align:right;color:#fff;">14</div>
<div style="position:absolute;left:39.8px;top:208px;color:#fff;">M109 S265 ; wait for temperature to be reached</div>
<div style="position:absolute;left:0;top:224px;width:36px;text-align:right;color:#fff;">15</div>
<div style="position:absolute;left:39.8px;top:224px;color:#fff;">G21 ; set units to millimeters</div>
<div style="position:absolute;left:0;top:240px;width:36px;text-align:right;color:#fff;">16</div>
<div style="position:absolute;left:39.8px;top:240px;color:#fff;">G90 ; use absolute coordinates</div>
<div style="position:absolute;left:0;top:256px;width:36px;text-align:right;color:#fff;">17</div>
<div style="position:absolute;left:39.8px;top:256px;color:#fff;">M106 S204</div>
<div style="position:absolute;left:0;top:272px;width:36px;text-align:right;color:#fff;">18</div>
<div style="position:absolute;left:39.8px;top:272px;color:#000;"><span style="color:#0a0a96">G1</span> <span style="color:#860000">Z</span>0.400 <span style="color:#860000">F</span>6000.000</div>
<div style="position:absolute;left:0;top:288px;width:36px;text-align:right;color:#fff;">19</div>
<div style="position:absolute;left:39.8px;top:288px;color:#000;"><span style="color:#0a0a96">G1</span> <span style="color:#860000">X</span>85.176 <span style="color:#860000">Y</span>86.069 <span style="color:#860000">F</span>6000.000</div>
<div style="position:absolute;left:0;top:304px;width:36px;text-align:right;color:#fff;">20</div>
<div style="position:absolute;left:39.8px;top:304px;color:#000;"><span style="color:#0a0a96">G1</span> <span style="color:#860000">X</span>86.932 <span style="color:#860000">Y</span>84.570 <span style="color:#860000">F</span>1800.000</div>
<div style="position:absolute;left:0;top:320px;width:36px;text-align:right;color:#fff;">21</div>
<div style="position:absolute;left:39.8px;top:320px;color:#000;"><span style="color:#0a0a96">G1</span> <span style="color:#860000">X</span>89.092 <span style="color:#860000">Y</span>83.754</div>
<div style="position:absolute;left:0;top:336px;width:36px;text-align:right;color:#fff;">22</div>
<div style="position:absolute;left:39.8px;top:336px;color:#000;"><span style="color:#0a0a96">G1</span> <span style="color:#860000">X</span>90.349 <span style="color:#860000">Y</span>83.635</div>
<div style="position:absolute;left:0;top:352px;width:36px;text-align:right;color:#fff;">23</div>
<div style="position:absolute;left:39.8px;top:352px;color:#000;"><span style="color:#0a0a96">G1</span> <span style="color:#860000">X</span>109.651 <span style="color:#860000">Y</span>83.635</div>
<div style="position:absolute;left:0;top:368px;width:36px;text-align:right;color:#fff;">24</div>
<div style="position:absolute;left:39.8px;top:368px;color:#000;"><span style="color:#0a0a96">G1</span> <span style="color:#860000">X</span>111.925 <span style="color:#860000">Y</span>84.032</div>
<div style="position:absolute;left:0;top:384px;width:36px;text-align:right;color:#fff;">25</div>
<div style="position:absolute;left:39.8px;top:384px;color:#000;"><span style="color:#0a0a96">G1</span> <span style="color:#860000">X</span>113.931 <span style="color:#860000">Y</span>85.176 <span style="color:#860000">F</span>1800.000</div>
<div style="position:absolute;left:0;top:400px;width:36px;text-align:right;color:#fff;">26</div>
<div style="position:absolute;left:39.8px;top:400px;color:#000;"><span style="color:#0a0a96">G1</span> <span style="color:#860000">X</span>115.430 <span style="color:#860000">Y</span>86.932</div>
<div style="position:absolute;left:0;top:416px;width:36px;text-align:right;color:#fff;">27</div>
<div style="position:absolute;left:39.8px;top:416px;color:#000;"><span style="color:#0a0a96">G1</span> <span style="color:#860000">X</span>116.246 <span style="color:#860000">Y</span>89.092</div>
<div style="position:absolute;left:0;top:432px;width:36px;text-align:right;color:#fff;">28</div>
<div style="position:absolute;left:39.8px;top:432px;color:#000;"><span style="color:#0a0a96">G1</span> <span style="color:#860000">X</span>116.365 <span style="color:#860000">Y</span>90.349</div>
<div style="position:absolute;left:0;top:448px;width:36px;text-align:right;color:#fff;">29</div>
<div style="position:absolute;left:39.8px;top:448px;color:#000;"><span style="color:#0a0a96">G1</span> <span style="color:#860000">X</span>116.365 <span style="color:#860000">Y</span>109.651</div>
<div style="position:absolute;left:0;top:464px;width:36px;text-align:right;color:#fff;">30</div>
<div style="position:absolute;left:39.8px;top:464px;color:#000;"><span style="color:#0a0a96">G1</span> <span style="color:#860000">X</span>115.968 <span style="color:#860000">Y</span>111.925</div>
<div style="position:absolute;left:0;top:480px;width:36px;text-align:right;color:#fff;">31</div>
<div style="position:absolute;left:39.8px;top:480px;color:#000;"><span style="color:#0a0a96">G1</span> <span style="color:#860000">X</span>114.824 <span style="color:#860000">Y</span>113.931</div>
<div style="position:absolute;left:0;top:496px;width:36px;text-align:right;color:#fff;">32</div>
<div style="position:absolute;left:39.8px;top:496px;color:#000;"><span style="color:#0a0a96">G1</span> <span style="color:#860000">X</span>113.068 <span style="color:#860000">Y</span>115.430</div>
<div style="position:absolute;left:0;top:512px;width:36px;text-align:right;color:#fff;">33</div>
<div style="position:absolute;left:39.8px;top:512px;color:#000;"><span style="color:#0a0a96">G1</span> <span style="color:#860000">X</span>110.908 <span style="color:#860000">Y</span>116.246</div>
<div style="position:absolute;left:0;top:528px;width:36px;text-align:right;color:#fff;">34</div>
<div style="position:absolute;left:39.8px;top:528px;color:#000;"><span style="color:#0a0a96">G1</span> <span style="color:#860000">X</span>109.651 <span style="color:#860000">Y</span>116.365</div>
<div style="position:absolute;left:0;top:544px;width:36px;text-align:right;color:#fff;">35</div>
<div style="position:absolute;left:39.8px;top:544px;color:#000;"><span style="color:#0a0a96">G1</span> <span style="color:#860000">X</span>90.349 <span style="color:#860000">Y</span>116.365</div>
<div style="position:absolute;left:0;top:560px;width:36px;text-align:right;color:#fff;">36</div>
<div style="position:absolute;left:39.8px;top:560px;color:#000;"><span style="color:#0a0a96">G1</span> <span style="color:#860000">X</span>88.075 <span style="color:#860000">Y</span>115.968</div>
<div style="position:absolute;left:0;top:576px;width:36px;text-align:right;color:#fff;">37</div>
<div style="position:absolute;left:39.8px;top:576px;color:#000;"><span style="color:#0a0a96">G1</span> <span style="color:#860000">X</span>86.069 <span style="color:#860000">Y</span>114.824</div>
<div style="position:absolute;left:0;top:592px;width:36px;text-align:right;color:#fff;">38</div>
<div style="position:absolute;left:39.8px;top:592px;color:#000;"><span style="color:#0a0a96">G1</span> <span style="color:#860000">X</span>84.570 <span style="color:#860000">Y</span>113.068</div>
<div style="position:absolute;left:0;top:608px;width:36px;text-align:right;color:#fff;">39</div>
<div style="position:absolute;left:39.8px;top:608px;color:#000;"><span style="color:#0a0a96">G1</span> <span style="color:#860000">X</span>83.754 <span style="color:#860000">Y</span>110.908</div>
<div style="position:absolute;left:0;top:624px;width:36px;text-align:right;color:#fff;">40</div>
<div style="position:absolute;left:39.8px;top:624px;color:#000;"><span style="color:#0a0a96">G1</span> <span style="color:#860000">X</span>83.635 <span style="color:#860000">Y</span>109.651</div>
<div style="position:absolute;left:0;top:640px;width:36px;text-align:right;color:#fff;">41</div>
<div style="position:absolute;left:39.8px;top:640px;color:#000;"><span style="color:#0a0a96">G1</span> <span style="color:#860000">X</span>83.635 <span style="color:#860000">Y</span>90.349</div>
</div>
<div class="r" style="left:1898px;top:149px;width:17px;height:642px;background:#f0f0f0;"></div>
<div class="r" style="left:1898px;top:149px;width:1px;height:642px;background:#ffffff;"></div>
<div class="r" style="left:1900px;top:166px;width:14px;height:16px;background:#cdcdcd;"></div>
<svg style="left:1895px;top:150px" width="22" height="660" viewBox="1895 150 22 660">
<path d="M1902.5,160.5 L1906.3,156.7 L1910.1,160.5" fill="none" stroke="#606060" stroke-width="1.4"/>
<path d="M1902.5,779.5 L1906.3,783.3 L1910.1,779.5" fill="none" stroke="#606060" stroke-width="1.4"/>
</svg>
<div class="r" style="left:1475px;top:791px;width:440px;height:21px;background:#f0f0f0;"></div>
<div class="r" style="left:1492px;top:792px;width:46px;height:16px;background:#cdcdcd;"></div>
<svg style="left:1475px;top:790px" width="440" height="22" viewBox="1475 790 440 22">
<path d="M1485.5,796 L1481.8,799.8 L1485.5,803.6" fill="none" stroke="#505050" stroke-width="1.8"/>
<path d="M1904,796 L1907.7,799.8 L1904,803.6" fill="none" stroke="#505050" stroke-width="1.8"/>
</svg>
<div class="r" style="left:1475px;top:812px;width:440px;height:179px;background:#f0f0f0;"></div>
<div class="r" style="left:1475px;top:833px;width:438px;height:157px;background:#ffffff;border:1px solid #d9d9d9;"></div>
<div class="r" style="left:1546.5px;top:815px;width:85px;height:19px;background:#f0f0f0;border:1px solid #d9d9d9;border-bottom:none;"></div>
<div class="r" style="left:1631px;top:815px;width:47px;height:19px;background:#f0f0f0;border:1px solid #d9d9d9;border-bottom:none;"></div>
<div class="r" style="left:1475.5px;top:813px;width:71.5px;height:21px;background:#ffffff;border:1px solid #d9d9d9;border-bottom:none;"></div>
<div class="t " style="left:1483.00px;top:817.74px;font-size:12px;color:#000;font-family:'Liberation Sans', sans-serif;font-weight:normal;transform:scaleX(0.9242);">Vizualizace</div>
<div class="t " style="left:1551.40px;top:819.34px;font-size:12px;color:#000;font-family:'Liberation Sans', sans-serif;font-weight:normal;transform:scaleX(0.9132);">G-Code Syntax</div>
<div class="t " style="left:1638.00px;top:819.34px;font-size:12px;color:#000;font-family:'Liberation Sans', sans-serif;font-weight:normal;transform:scaleX(0.8891);">Search</div>
<svg style="left:1485px;top:835px" width="30" height="70" viewBox="1485 835 30 70">
<circle cx="1498.5" cy="846.5" r="6" fill="#fff" stroke="#333" stroke-width="1"/>
<circle cx="1498.5" cy="846.5" r="3.6" fill="#333"/>
<circle cx="1498.5" cy="869.6" r="6" fill="#fff" stroke="#333" stroke-width="1"/>
<circle cx="1498.5" cy="892.3" r="6" fill="#fff" stroke="#333" stroke-width="1"/>
</svg>
<div class="t " style="left:1510.70px;top:841.04px;font-size:12px;color:#000;font-family:'Liberation Sans', sans-serif;font-weight:normal;transform:scaleX(0.9872);">Zobrazit kompletní kód</div>
<div class="t " style="left:1510.70px;top:863.84px;font-size:12px;color:#000;font-family:'Liberation Sans', sans-serif;font-weight:normal;transform:scaleX(0.9698);">Zobrazit jednu vrstvu</div>
<div class="t " style="left:1510.70px;top:886.54px;font-size:12px;color:#000;font-family:'Liberation Sans', sans-serif;font-weight:normal;transform:scaleX(0.9378);">Zobrazit vybrané vrstvy</div>
<div class="r" style="left:1486px;top:921px;width:130px;height:21px;background:#e1e1e1;border:1px solid #adadad;"></div>
<div class="r" style="left:1486px;top:949px;width:130px;height:21px;background:#e1e1e1;border:1px solid #adadad;"></div>
<div class="t " style="left:1520.50px;top:926.04px;font-size:12px;color:#000;font-family:'Liberation Sans', sans-serif;font-weight:normal;transform:scaleX(0.9001);">První vrstva:</div>
<div class="t " style="left:1511.50px;top:953.84px;font-size:12px;color:#000;font-family:'Liberation Sans', sans-serif;font-weight:normal;transform:scaleX(0.9210);">Poslední vrstva:</div>
<div class="r" style="left:1619px;top:923px;width:59px;height:22px;background:#ffffff;border:1px solid #abadb3;"></div>
<div class="r" style="left:1662px;top:925px;width:14px;height:9px;background:#f0f0f0;border:1px solid #c8c8c8;"></div>
<div class="r" style="left:1662px;top:934px;width:14px;height:9px;background:#f0f0f0;border:1px solid #c8c8c8;"></div>
<svg style="left:1660px;top:923px" width="20" height="22" viewBox="1660 923 20 22"><path d="M1666,931.5 L1669,928 L1672,931.5 Z M1666,936.5 L1669,940 L1672,936.5 Z" fill="#000"/></svg>
<div class="r" style="left:1619px;top:949px;width:59px;height:22px;background:#ffffff;border:1px solid #abadb3;"></div>
<div class="r" style="left:1662px;top:951px;width:14px;height:9px;background:#f0f0f0;border:1px solid #c8c8c8;"></div>
<div class="r" style="left:1662px;top:960px;width:14px;height:9px;background:#f0f0f0;border:1px solid #c8c8c8;"></div>
<svg style="left:1660px;top:949px" width="20" height="22" viewBox="1660 949 20 22"><path d="M1666,957.5 L1669,954 L1672,957.5 Z M1666,962.5 L1669,966 L1672,962.5 Z" fill="#000"/></svg>
<div class="t " style="left:1620.50px;top:926.04px;font-size:12px;color:#000;font-family:'Liberation Sans', sans-serif;font-weight:normal;">0</div>
<div class="t " style="left:1620.50px;top:951.84px;font-size:12px;color:#000;font-family:'Liberation Sans', sans-serif;font-weight:normal;">0</div>
<div class="r" style="left:1698px;top:930px;width:168px;height:8.5px;background:linear-gradient(#c8c8c8,#6a6a6a 45%,#5a5a5a 55%,#c8c8c8);border-radius:1px;"></div>
<div class="r" style="left:1698px;top:954px;width:168px;height:8.5px;background:linear-gradient(#c8c8c8,#6a6a6a 45%,#5a5a5a 55%,#c8c8c8);border-radius:1px;"></div>
<div class="r" style="left:1684.5px;top:924.5px;width:14px;height:19px;background:linear-gradient(#fafafa,#e4e4e4);border:1px solid #b8b8b8;border-radius:4px;"></div>
<div class="r" style="left:1684.5px;top:948.5px;width:14px;height:19px;background:linear-gradient(#fafafa,#e4e4e4);border:1px solid #b8b8b8;border-radius:4px;"></div>
<div class="t " style="left:1875.00px;top:953.19px;font-size:11px;color:#000;font-family:'Liberation Sans', sans-serif;font-weight:normal;">0</div>
<div class="r" style="left:1475px;top:991px;width:440px;height:22px;background:#f0f0f0;"></div>
<div class="r" style="left:1475px;top:990px;width:438px;height:1px;background:#e0e0e0;"></div>
<div class="t " style="left:1479.20px;top:996.74px;font-size:12px;color:#000;font-family:'Liberation Sans', sans-serif;font-weight:normal;transform:scaleX(0.9586);">R1  C1  Vložit  Vrstva 0  Extruder 0  Doba tisku:5m:55s</div>
<div class="r" style="left:1463px;top:1013px;width:2px;height:2px;background:#ffffff;"></div>
<div class="t " style="left:4.40px;top:1024.09px;font-size:12px;color:#000;font-family:'Liberation Sans', sans-serif;font-weight:normal;transform:scaleX(1.0095);">Odpojeno: default</div>
<div class="t " style="left:857.50px;top:1024.34px;font-size:12px;color:#000;font-family:'Liberation Sans', sans-serif;font-weight:normal;">-</div>
<div class="t " style="left:1628.00px;top:1024.09px;font-size:12px;color:#000;font-family:'Liberation Sans', sans-serif;font-weight:normal;transform:scaleX(0.9967);">Nečinnost.</div>
<div class="r" style="left:1690px;top:1021px;width:214px;height:16px;background:#e6e6e6;border:1px solid #bcbcbc;"></div>
<div class="r" style="left:0px;top:1040px;width:1920px;height:40px;background:linear-gradient(to right,#10294a 0%,#0f2a4b 12%,#0c2340 25%,#0a1f36 40%,#0c2239 55%,#0e2846 65%,#0d2b52 80%,#0e2a4e 92%,#0b2238 100%);"></div>
<svg style="left:0;top:1040px" width="1920" height="40" viewBox="0 1040 1920 40">
<polygon points="150,1040 330,1040 250,1080 60,1080" fill="#2a5070" opacity="0.22"/>
<polygon points="420,1040 520,1040 470,1080 380,1080" fill="#3a6080" opacity="0.15"/>
<polygon points="1000,1040 1200,1040 1120,1080 960,1080" fill="#3a5a78" opacity="0.18"/>
<polygon points="1060,1040 1100,1040 1000,1080 970,1080" fill="#6a8aa8" opacity="0.15"/>
</svg>
<div class="r" style="left:392px;top:1040px;width:48px;height:38px;background:#1d4f84;"></div>
<div class="r" style="left:102px;top:1078px;width:31px;height:2px;background:#86b8e8;"></div>
<div class="r" style="left:151px;top:1078px;width:40px;height:2px;background:#86b8e8;"></div>
<div class="r" style="left:298px;top:1078px;width:40px;height:2px;background:#86b8e8;"></div>
<div class="r" style="left:347px;top:1078px;width:40px;height:2px;background:#86b8e8;"></div>
<div class="r" style="left:392px;top:1078px;width:48px;height:2px;background:#86b8e8;"></div>
<div class="r" style="left:445px;top:1078px;width:40px;height:2px;background:#86b8e8;"></div>
<div class="r" style="left:134px;top:1078px;width:8px;height:2px;background:#5d7a99;"></div>
<svg style="left:0;top:1040px" width="500" height="40" viewBox="0 1040 500 40">
<path d="M15.6,1053.9 L22.9,1052.8 V1059.5 H15.6 Z M23.8,1052.6 L32.3,1051.4 V1059.5 H23.8 Z M15.6,1060.4 H22.9 V1067.1 L15.6,1066 Z M23.8,1060.4 H32.3 V1068.4 L23.8,1067.2 Z" fill="#fff"/>
<rect x="66.5" y="1053.5" width="12" height="13.3" fill="none" stroke="#fff" stroke-width="1.1"/>
<path d="M64.5,1055.5 H62.5 V1064.8 H64.5 M80.5,1055.5 H82.5 V1064.8 H80.5" fill="none" stroke="#fff" stroke-width="1.1"/>
<path d="M111,1053 H117 L118.5,1051 H124 V1053 H132.5 V1068.5 H111 Z" fill="#f4c64a"/>
<rect x="111" y="1054.5" width="21.5" height="14" fill="#ffdf7a"/>
<rect x="113" y="1052" width="2" height="1.2" fill="#4aa8e0"/>
<path d="M115.5,1070 V1062.5 H129 V1070 H125.5 V1066 H119 V1070 Z" fill="#2aa8e6"/>
<circle cx="171" cy="1059.8" r="10.6" fill="#db4437"/>
<path d="M171,1059.8 L161.8,1054.5 A10.6,10.6 0 0 0 165.7,1069 Z" fill="#0f9d58"/>
<path d="M171,1059.8 L165.7,1069 A10.6,10.6 0 0 0 181.6,1059.8 Z" fill="#ffcd40"/>
<path d="M171,1059.8 L181.6,1059.8 A10.6,10.6 0 0 0 171,1049.2 L161.8,1054.5 Z" fill="#db4437"/>
<circle cx="171" cy="1059.8" r="4.9" fill="#fff"/>
<circle cx="171" cy="1059.8" r="3.9" fill="#4285f4"/>
<circle cx="219.7" cy="1059.8" r="10.8" fill="#e2b21a"/>
<path d="M219.7,1059.8 L229,1054.4 A10.8,10.8 0 0 1 214.3,1069.2 Z" fill="#f0c52b" opacity="0.8"/>
<circle cx="219.7" cy="1059.8" r="4.8" fill="#f2c230" stroke="#f7e2a0" stroke-width="0.8"/>
<path d="M258.9,1049.9 L269.6,1050.8 L271.3,1048.4 L279.6,1048.4 L280.8,1049.9 L280.5,1056.4 L278.4,1059.4 L277.3,1063 L277.9,1069.8 L274.6,1070.1 L274,1063.3 L269.6,1063 L270.1,1071.3 L267.5,1071.6 L266.6,1065.9 L265,1065 L263,1060.6 L260.7,1061.2 L260.4,1068.3 L258,1068 L257.4,1056.4 Z" fill="#e00808"/>
<path d="M318,1048.5 L321,1048.5 L327.5,1067 L330,1067 L330,1070.5 L307,1070.5 L307,1067 L310,1067 Z" fill="#f08010"/>
<path d="M315.3,1055.5 H322.8 L324,1059 H314 Z M313,1062 H325.2 L326.3,1065 H312 Z" fill="#e8e8e8"/>
<ellipse cx="367" cy="1059.5" rx="8.4" ry="10.5" fill="#8a8a1a"/>
<path d="M375,1050.5 L358.5,1068.5 L360.5,1069.5 L376.5,1052 Z" fill="#e8e820"/>
<path d="M404.5,1051 L409,1048.5 H428 L424,1051 Z" fill="#3a5ab0"/>
<path d="M424,1051 L428,1048.5 V1068 L424,1071 Z" fill="#4a9a3a"/>
<rect x="404.5" y="1051" width="19.5" height="20" fill="#f0d8a0"/>
<rect x="406.5" y="1053" width="15.5" height="16" fill="#c83228"/>
<text x="409" y="1067" font-family="Liberation Sans" font-weight="bold" font-size="14" fill="#f4e2b0">R</text>
<defs><linearGradient id="np" x1="0" y1="0" x2="1" y2="1"><stop offset="0" stop-color="#e6f6fc"/><stop offset="0.5" stop-color="#7cc8e4"/><stop offset="1" stop-color="#2a8cb8"/></linearGradient></defs>
<polygon points="462.5,1049.5 474.5,1052 476.2,1066.5 469,1071" fill="#f2f4f6"/>
<line x1="475.8" y1="1056" x2="476.4" y2="1066.5" stroke="#d89a2a" stroke-width="1.2"/>
<polygon points="452.8,1065.5 462.5,1049.5 473.2,1052.5 468.8,1070" fill="url(#np)"/>
<path d="M463,1050 L473,1052.5" stroke="#9aa4ac" stroke-width="1.4" stroke-dasharray="1 0.8"/>
</svg>
<svg style="left:1600px;top:1040px" width="320" height="40" viewBox="1600 1040 320 40">
<path d="M1610.5,1062.5 L1616,1057 L1621.5,1062.5" fill="none" stroke="#fff" stroke-width="1.2"/>
<rect x="1645.5" y="1055.5" width="10" height="8.5" fill="none" stroke="#fff" stroke-width="1.1"/>
<rect x="1655.5" y="1058" width="1.5" height="3.5" fill="#fff"/>
<rect x="1647" y="1057" width="4.5" height="5.5" fill="#fff"/>
<path d="M1641,1056 V1059.5 Q1641,1061.5 1643,1061.5 H1645.5 M1641.5,1054 V1056 M1644,1054 V1056 M1640.5,1056 H1644.8 M1643,1061.5 V1064" fill="none" stroke="#fff" stroke-width="1"/>
<path d="M1675.5,1064.5 A11,11 0 0 1 1686.5,1053.5 M1678,1064.5 A8.5,8.5 0 0 1 1686.5,1056 M1680.5,1064.5 A6,6 0 0 1 1686.5,1058.5" fill="none" stroke="#d8d8d8" stroke-width="0.9"/>
<rect x="1683.5" y="1061.5" width="3.5" height="3.5" fill="#fff"/>
<path d="M1703.5,1057.5 H1706.5 L1710.5,1053.5 V1066.5 L1706.5,1062.5 H1703.5 Z" fill="none" stroke="#fff" stroke-width="1.1"/>
<path d="M1713,1057.5 Q1715,1060 1713,1062.5 M1715.5,1055.5 Q1719,1060 1715.5,1064.5" fill="none" stroke="#fff" stroke-width="1.1"/>
<path d="M1718.5,1053 Q1723,1060 1718.5,1067" fill="none" stroke="#8a9ab0" stroke-width="1"/>
<path d="M1736.5,1052.5 H1752 V1065 H1746 L1744,1068 L1742,1065 H1736.5 Z" fill="none" stroke="#fff" stroke-width="1.1"/>
<path d="M1739.5,1055.5 H1749 M1739.5,1058.2 H1749 M1739.5,1061 H1745" stroke="#fff" stroke-width="0.9"/>
<rect x="1768" y="1053.5" width="22.5" height="12" fill="none" stroke="#fff" stroke-width="1.1"/>
<path d="M1770.5,1056.5 H1788 M1770.5,1059.5 H1788 M1773,1062.5 H1786" stroke="#fff" stroke-width="0.9" stroke-dasharray="1.4 1"/>
<line x1="1915.5" y1="1040" x2="1915.5" y2="1080" stroke="#4a5a6a" stroke-width="1"/>
</svg>
<div class="t " style="left:1806.00px;top:1054.14px;font-size:12px;color:#fff;font-family:'Liberation Sans', sans-serif;font-weight:normal;transform:scaleX(0.8731);">ENG</div>
<div class="t " style="left:1862.50px;top:1045.04px;font-size:12px;color:#fff;font-family:'Liberation Sans', sans-serif;font-weight:normal;transform:scaleX(0.8755);">11:44</div>
<div class="t " style="left:1846.70px;top:1062.34px;font-size:12px;color:#fff;font-family:'Liberation Sans', sans-serif;font-weight:normal;transform:scaleX(0.9545);">10/08/2015</div>
</body></html>
